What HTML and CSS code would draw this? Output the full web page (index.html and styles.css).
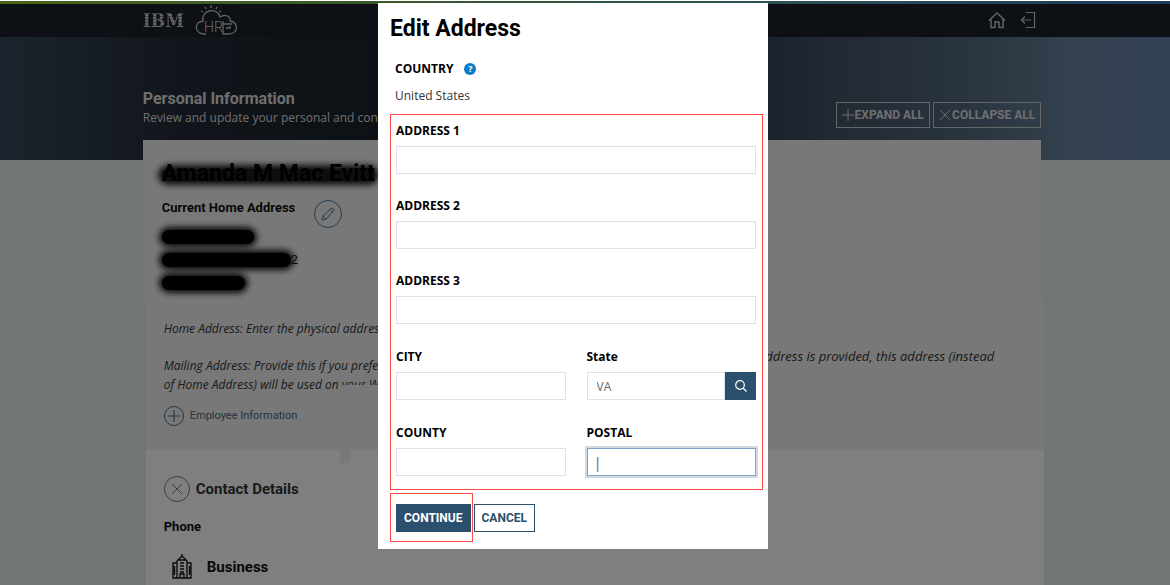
FILE: index.html
```html
<!DOCTYPE html>
<html lang="en">

<head>
    <meta charset="UTF-8">
    <meta name="viewport" content="width=device-width, initial-scale=1.0">
    <title>Personal Information</title>
    <link rel="stylesheet" href="styles.css">
</head>

<body>
    <!-- Top bar -->
    <header class="topbar">
        <div class="container topbar-inner">
            <div class="brand">
                <span class="brand-name">IBM</span>
                <svg class="brand-cloud" viewBox="0 0 44 32" width="44" height="32" fill="none" stroke="currentColor" stroke-width="1.3">
                    <path d="M9 30C-1 29-1 18 8 17C6 5 23 3 25 13C31 9 36 13 35 17C44 18 44 30 33 30H28V17M9 30H11M28 20H37M31 24H35V22" />
                    <path d="M16 1V4M10 3L11 5M22 3L21 5M6 7L8 8M26 7L24 8" />
                    <text x="9" y="28" class="cloud-text">HR</text>
                </svg>
            </div>
            <nav class="topbar-links">
                <a href="#" aria-label="Home">
                    <svg viewBox="0 0 18 18" width="18" height="18" fill="none" stroke="currentColor" stroke-width="1.5">
                        <path d="M1 9.5L9 2L17 9.5M3 8V16.5H7V11H11V16.5H15V8" />
                    </svg>
                </a>
                <a href="#" aria-label="Sign out">
                    <svg viewBox="0 0 16 18" width="16" height="18" fill="none" stroke="currentColor" stroke-width="1.2">
                        <path d="M6 1.5H14.5V16.5H6M11 9H1.5M5 5.5L1.5 9L5 12.5" />
                    </svg>
                </a>
            </nav>
        </div>
    </header>

    <!-- Page heading -->
    <section class="hero">
        <div class="container hero-inner">
            <div>
                <h1>Personal Information</h1>
                <p>Review and update your personal and contact</p>
            </div>
            <div class="hero-buttons">
                <button type="button">
                    <svg viewBox="0 0 12 12" width="12" height="12" fill="none" stroke="currentColor"><path d="M6 0V12M0 6H12" /></svg>
                    EXPAND ALL
                </button>
                <button type="button">
                    <svg viewBox="0 0 12 12" width="12" height="12" fill="none" stroke="currentColor"><path d="M1 1L11 11M11 1L1 11" /></svg>
                    COLLAPSE ALL
                </button>
            </div>
        </div>
    </section>

    <main class="container">
        <section class="profile">
            <h2><span class="redacted-name">Amanda M Mac Evitt</span></h2>
            <div class="home-address">
                <h3>Current Home Address</h3>
                <button type="button" class="edit-button" aria-label="Edit home address">
                    <svg viewBox="0 0 14 14" width="14" height="14" fill="none" stroke="currentColor">
                        <path d="M1 13L2 9L10 1.5Q11 .5 12.3 1.7Q13.5 3 12.5 4L5 12ZM2 9L5 12M9 2.5L11.5 5" />
                    </svg>
                </button>
            </div>
            <div class="address-lines">
                <span class="redacted line-one"></span>
                <span class="redacted-row"><span class="redacted line-two"></span>2</span>
                <span class="redacted line-three"></span>
            </div>
        </section>

        <section class="notes">
            <div class="notes-text">
                <div class="notes-left">
                    <p>Home Address: Enter the physical address</p>
                    <p>Mailing Address: Provide this if you prefer<br>of Home Address) will be used on <span class="cut-text">your W</span></p>
                </div>
                <div class="notes-right">
                    <p>ddress is provided, this address (instead</p>
                </div>
            </div>
            <a href="#" class="employee-link">
                <svg viewBox="0 0 20 20" width="20" height="20" fill="none" stroke="currentColor">
                    <circle cx="10" cy="10" r="9.5" /><path d="M10 4V16M4 10H16" />
                </svg>
                Employee Information
            </a>
        </section>

        <section class="contact">
            <h2>
                <svg viewBox="0 0 26 26" width="26" height="26" fill="none" stroke="currentColor">
                    <circle cx="13" cy="13" r="12.5" /><path d="M8 8L18 18M18 8L8 18" />
                </svg>
                Contact Details
            </h2>
            <h3>Phone</h3>
            <h4>
                <svg viewBox="0 0 20 25" width="20" height="25" fill="none" stroke="currentColor" stroke-width="1.3">
                    <path d="M5 24V7L10 2L15 7V24M5 9H1V24H19V9H15M6 6H14M10 0V3M8 24V20H12V24M2.5 12V21M17.5 12V21" />
                    <path d="M8 9H12M8 12H12M8 15H12M8 18H12" />
                </svg>
                Business
            </h4>
        </section>
    </main>

    <!-- Edit address dialog -->
    <div class="backdrop">
        <form class="modal" role="dialog" aria-labelledby="modalTitle">
            <h2 id="modalTitle">Edit Address</h2>
            <div class="country">
                <span class="country-label">COUNTRY
                    <button type="button" class="help" aria-label="Help">?</button>
                </span>
                <span class="country-value">United States</span>
            </div>

            <div class="highlight fields">
                <div class="field">
                    <label for="address1">ADDRESS 1</label>
                    <input type="text" id="address1">
                </div>
                <div class="field">
                    <label for="address2">ADDRESS 2</label>
                    <input type="text" id="address2">
                </div>
                <div class="field">
                    <label for="address3">ADDRESS 3</label>
                    <input type="text" id="address3">
                </div>
                <div class="field-grid">
                    <div class="field">
                        <label for="city">CITY</label>
                        <input type="text" id="city">
                    </div>
                    <div class="field">
                        <label for="state">State</label>
                        <div class="search-group">
                            <input type="text" id="state" value="VA">
                            <button type="button" aria-label="Search states">
                                <svg viewBox="0 0 12 12" width="12" height="12" fill="none" stroke="currentColor" stroke-width="1.2">
                                    <circle cx="5" cy="5" r="4.3" /><path d="M8 8L11.5 11.5" />
                                </svg>
                            </button>
                        </div>
                    </div>
                    <div class="field">
                        <label for="county">COUNTY</label>
                        <input type="text" id="county">
                    </div>
                    <div class="field">
                        <label for="postal">POSTAL</label>
                        <input type="text" id="postal" class="active" value="|">
                    </div>
                </div>
            </div>

            <div class="actions">
                <div class="highlight continue-box">
                    <button type="button" class="primary">CONTINUE</button>
                </div>
                <button type="button" class="secondary">CANCEL</button>
            </div>
        </form>
    </div>
</body>

</html>
```

FILE: styles.css
```css
* {
    box-sizing: border-box;
}

body {
    margin: 0;
    height: 100vh;
    overflow: hidden;
    background-color: #e3eaec;
    color: #111;
    font-family: Roboto, sans-serif;
    font-size: 12px;
    line-height: 18px;
}

h1, h2, h3, h4, p {
    margin: 0;
}

a {
    color: inherit;
    text-decoration: none;
}

button,
input {
    font-family: inherit;
    border-radius: 0;
}

svg {
    display: block;
    flex-shrink: 0;
}

.container {
    width: 76.8%;
    margin-left: 12.2%;
}

/* Top bar */
.topbar {
    height: 37px;
    background: linear-gradient(90deg, #94c82c, #6eb35c 34%, #5c9fae 68%, #3775b8) 0 0 / 100% 3px no-repeat, #1a222b;
    border-top: 1px solid #fff;
}

.topbar-inner {
    display: flex;
    justify-content: space-between;
    align-items: center;
    padding-top: 3px;
    color: #c4c4c4;
}

.brand {
    display: flex;
    align-items: center;
    gap: 11px;
}

.brand-name {
    font-family: "DejaVu Serif Condensed", "DejaVu Serif", serif;
    font-size: 19px;
    font-weight: bold;
    line-height: 24px;
    color: transparent;
    background: repeating-linear-gradient(#ccc 0 2px, #888 2px 3px);
    background-clip: text;
    -webkit-background-clip: text;
}

.cloud-text {
    font-family: Roboto, sans-serif;
    font-size: 14px;
    font-weight: 300;
    fill: #d0d0d0;
    stroke: none;
}

.topbar-links {
    display: flex;
    gap: 14px;
    margin-right: 5px;
}

/* Heading */
.hero {
    height: 123px;
    background: linear-gradient(90deg, #364a5a, #262d3a 14%, #1a242c 28%, #1a232c 50%, #384a5c 67%, #455468 72%, #546a7f 83%, #66809a 91%, #6884b0);
}

.hero-inner {
    display: flex;
    justify-content: space-between;
    padding-top: 52px;
    color: #dedede;
    font-family: "Open Sans", sans-serif;
}

.hero h1 {
    font-family: Roboto, sans-serif;
    font-size: 16px;
    line-height: 20px;
}

.hero-buttons {
    display: flex;
    gap: 3px;
    padding-top: 13px;
}

.hero-buttons button {
    display: flex;
    align-items: center;
    gap: 1px;
    height: 26px;
    padding: 0 5px;
    border: 1px solid #ccc;
    background: none;
    color: #dedede;
    font-family: Roboto, sans-serif;
    font-size: 12px;
    font-weight: bold;
}

/* Profile */
.profile {
    height: 160px;
    margin-top: -20px;
    padding: 22px 19px 0;
    background-color: #f1f1f1;
}

.profile h2 {
    height: 24px;
    padding-top: 7px;
    font-size: 23px;
    line-height: 10px;
}

.profile h3 {
    font-size: 13px;
}

.redacted-name {
    display: block;
    width: max-content;
    height: 12px;
    border-radius: 6px;
    background-color: #1c1c1c;
    box-shadow: 0 0 6px 4px #1c1c1c;
    color: #000;
    white-space: nowrap;
}

.home-address {
    display: flex;
    gap: 19px;
    padding-top: 13px;
}

.edit-button {
    display: flex;
    align-items: center;
    justify-content: center;
    width: 28px;
    height: 28px;
    margin-top: 1px;
    padding: 0;
    border: 1px solid #527d9c;
    border-radius: 50%;
    background: none;
    color: #527d9c;
}

.address-lines {
    display: flex;
    flex-direction: column;
    gap: 7px;
    padding-top: 2px;
}

.redacted {
    height: 14px;
    border-radius: 7px;
    background-color: #000;
    box-shadow: 0 0 6px 3px #111;
}

.line-one {
    width: 92px;
}

.line-two {
    width: 129px;
}

.line-three {
    width: 83px;
}

.redacted-row {
    display: flex;
    align-items: center;
    height: 18px;
    font-size: 13px;
}

/* Notes */
.notes,
.contact {
    margin: 0 -3px 0 3px;
}

.notes {
    height: 150px;
    padding: 19px 18px 0;
    background-color: #f1f1f1;
    color: #333;
    font-family: "Open Sans", sans-serif;
}

.notes-text {
    display: flex;
    justify-content: space-between;
    font-size: 12px;
    font-style: italic;
    line-height: 19px;
}

.notes-left p + p {
    padding-top: 18px;
}

.notes-right {
    padding: 28px 32px 0 0;
    font-size: 13px;
}

.cut-text {
    display: inline-block;
    height: 10px;
    overflow: hidden;
    vertical-align: top;
}

.employee-link {
    display: flex;
    align-items: center;
    gap: 6px;
    padding-top: 12px;
    color: #486b86;
    font-family: Roboto, sans-serif;
    font-size: 11px;
}

/* Contact */
.contact {
    height: 140px;
    padding: 26px 18px 0;
    background: linear-gradient(#f1f1f1, #f1f1f1) 194px 0 / 10px 13px no-repeat, #fff;
}

.contact h2 {
    display: flex;
    align-items: center;
    gap: 6px;
    color: #333;
    font-size: 15px;
}

.contact h2 svg {
    color: #66809a;
}

.contact h3 {
    padding-top: 16px;
    font-size: 13px;
}

.contact h4 {
    display: flex;
    align-items: center;
    gap: 15px;
    padding: 18px 8px 0;
    font-size: 15px;
}

/* Dialog */
.backdrop {
    position: fixed;
    inset: 1px 0 0;
    display: flex;
    justify-content: center;
    align-items: flex-start;
    padding: 2px 24px 0 0;
    background-color: rgba(0, 0, 0, 0.5);
}

.modal {
    width: 390px;
    padding: 12px 5px 7px 12px;
    background-color: #fff;
    color: #000;
    font-family: "Open Sans", sans-serif;
}

.modal h2 {
    font-family: Roboto, sans-serif;
    font-size: 23px;
    line-height: 28px;
}

.country {
    display: flex;
    flex-direction: column;
    gap: 9px;
    padding: 17px 5px 9px;
}

.country-label {
    display: flex;
    align-items: center;
    gap: 11px;
    font-weight: bold;
}

.country-value {
    color: #333;
}

.help {
    width: 12px;
    height: 12px;
    padding: 0;
    border: none;
    border-radius: 50%;
    background-color: #0a7bc9;
    color: #fff;
    font-size: 9px;
    font-weight: bold;
    line-height: 12px;
}

.highlight {
    border: 1px solid #ff4a4a;
}

.fields {
    display: flex;
    flex-direction: column;
    gap: 23px;
    padding: 7px 6px 13px 5px;
}

.field {
    display: flex;
    flex-direction: column;
    gap: 6px;
}

.field label {
    font-weight: bold;
}

.field input {
    width: 100%;
    height: 28px;
    padding: 0 9px;
    border: 1px solid #dce2e7;
    color: #666;
    font-size: 12px;
}

.field .active {
    padding: 0 6px;
    border-color: #7fa5c8;
    outline: 2px solid #d2dae0;
    font-size: 15px;
}

.field-grid {
    display: grid;
    grid-template-columns: 1fr 1fr;
    gap: 24px 21px;
    padding-top: 1px;
}

.search-group {
    display: flex;
}

.search-group button {
    display: flex;
    align-items: center;
    justify-content: center;
    flex: 0 0 31px;
    padding: 0;
    border: none;
    background-color: #2b506d;
    color: #fff;
}

.actions {
    display: flex;
    align-items: center;
    gap: 1px;
    padding-top: 3px;
}

.continue-box {
    padding: 10px 1px 9px 5px;
}

.actions button {
    display: block;
    height: 28px;
    padding: 0 7px;
    border: 1px solid #2b506d;
    font-family: Roboto, sans-serif;
    font-size: 12px;
    font-weight: bold;
}

.actions .primary {
    background-color: #2b506d;
    color: #fff;
}

.actions .secondary {
    background-color: #fff;
    color: #2b506d;
}
```
